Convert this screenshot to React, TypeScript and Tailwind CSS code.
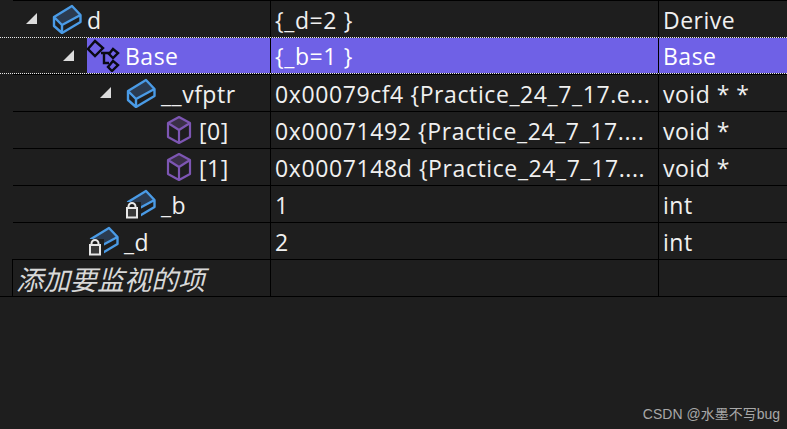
import React from "react";

const Tri = () => (
  <svg width="11" height="11" viewBox="0 0 11 11" className="shrink-0">
    <polygon points="11,0 11,11 0,11" fill="#dcdcdc" />
  </svg>
);

const Box = ({ lock }: { lock?: boolean }) => (
  <span className="relative block w-[30px] h-[30px] shrink-0">
    <svg width="30" height="30" viewBox="0 0 30 30" className="block">
      <polygon points="2,13 20,3 28,11 10,21" fill="#2b3b50" />
      <path
        d="M2 13 L20 2 L28.5 11 V18 L10 29 L2 22 Z M2 13 L10 21 L28.5 11 M10 21 V29"
        fill="none"
        stroke="#4a9be6"
        strokeWidth="2.4"
        strokeLinejoin="round"
      />
    </svg>
    {lock && (
      <svg width="15" height="18" viewBox="0 0 15 18" className="absolute left-0 top-[13px]">
        <rect x="0" y="0" width="15" height="18" fill="#1e1e1e" />
        <path d="M2.5 6 V4.5 a3.5 3.5 0 0 1 7 0 V6" fill="none" stroke="#e8e8e8" strokeWidth="2" />
        <rect x="1" y="6" width="10" height="9.5" fill="#3a3a3a" stroke="#e8e8e8" strokeWidth="2" />
      </svg>
    )}
  </span>
);

const Cube = () => (
  <svg width="26" height="28" viewBox="0 0 26 28" className="shrink-0 mr-[2px]">
    <polygon points="13,1 24,7 13,14 2,7" fill="#3a2f47" />
    <path
      d="M13 1 L24 7 V21 L13 27 L2 21 V7 Z M2 7 L13 14 L24 7 M13 14 V27"
      fill="none"
      stroke="#7d56b3"
      strokeWidth="2.2"
      strokeLinejoin="round"
    />
  </svg>
);

const BaseIcon = () => (
  <svg width="33" height="33" viewBox="0 0 33 33" className="shrink-0">
    <g fill="none" stroke="#0a0a14" strokeWidth="2.4" strokeLinejoin="miter">
      <polygon points="8,2 16,9 8,17 1,10" />
      <polygon points="26,10 31,14 26,19 22,15" />
      <polygon points="26,22 31,26 25,32 21,28" />
      <path d="M14 14 H22 M17 13 V24 H22" />
    </g>
  </svg>
);

type RowProps = {
  indent: number;
  tri?: boolean;
  icon: React.ReactNode;
  name: string;
  value: string;
  type: string;
};

const Row = ({ indent, tri, icon, name, value, type }: RowProps) => (
  <div className="flex h-[37px] ml-[13px] border-t border-black">
    <div className="w-[257px] flex items-center shrink-0 whitespace-nowrap" style={{ paddingLeft: indent }}>
      <span className="w-[11px] h-[11px] mr-[15px] shrink-0 mt-[-1px] flex">{tri && <Tri />}</span>
      {icon}
      <span className="ml-[5px] pt-[2px]">{name}</span>
    </div>
    <div className="w-[388px] flex items-center pl-[4px] pt-[2px] border-l border-black shrink-0 whitespace-nowrap overflow-hidden tracking-[0.6px]">
      {value}
    </div>
    <div className="flex-1 flex items-center pl-[4px] pt-[2px] border-l border-black whitespace-nowrap">{type}</div>
  </div>
);

export default function App() {
  return (
    <div
      className="w-[787px] h-[429px] bg-[#1e1e1e] text-[#f0f0f0] text-[23px] tracking-[0.5px] flex flex-col overflow-hidden"
      style={{ fontFamily: '"Open Sans", "Noto Sans", sans-serif' }}
    >
      <Row indent={13} tri icon={<Box />} name="d" value="{_d=2 }" type="Derive" />

      <div className="flex h-[37px] border-y border-dotted border-[#e8e8e8] text-white">
        <div className="w-[87px] shrink-0 flex items-center justify-end pr-[13px]">
          <Tri />
        </div>
        <div className="w-[183px] shrink-0 flex items-center bg-[#6f61e6] whitespace-nowrap">
          <BaseIcon />
          <span className="ml-[5px] pt-[2px]">Base</span>
        </div>
        <div className="w-[388px] shrink-0 flex items-center pl-[4px] pt-[2px] bg-[#6f61e6] border-l border-black tracking-[0.6px]">
          {"{_b=1 }"}
        </div>
        <div className="flex-1 flex items-center pl-[4px] pt-[2px] bg-[#6f61e6] border-l border-black">Base</div>
      </div>

      <Row indent={87} tri icon={<Box />} name="__vfptr" value="0x00079cf4 {Practice_24_7_17.e..." type="void * *" />
      <Row indent={127} icon={<Cube />} name="[0]" value="0x00071492 {Practice_24_7_17...." type="void *" />
      <Row indent={127} icon={<Cube />} name="[1]" value="0x0007148d {Practice_24_7_17...." type="void *" />
      <Row indent={87} icon={<Box lock />} name="_b" value="1" type="int" />
      <Row indent={50} icon={<Box lock />} name="_d" value="2" type="int" />

      <div className="h-[38px] border-b border-black">
        <div className="flex h-[37px] ml-[12px] border-t border-l border-black">
          <div
            className="w-[257px] shrink-0 flex items-center pl-[3px] pt-[2px] italic text-[#d8d8d8] text-[27px] tracking-normal whitespace-nowrap"
            style={{ fontFamily: '"Noto Sans CJK SC", sans-serif' }}
          >
            添加要监视的项
          </div>
          <div className="w-[388px] shrink-0 border-l border-black" />
          <div className="flex-1 border-l border-black" />
        </div>
      </div>

      <div
        className="mt-auto self-end mr-[7px] mb-[6px] text-[14px] text-[#a8a8a8] leading-[18px] tracking-normal"
        style={{ fontFamily: '"Liberation Sans", "Noto Sans CJK SC", sans-serif' }}
      >
        CSDN @水墨不写bug
      </div>
    </div>
  );
}
